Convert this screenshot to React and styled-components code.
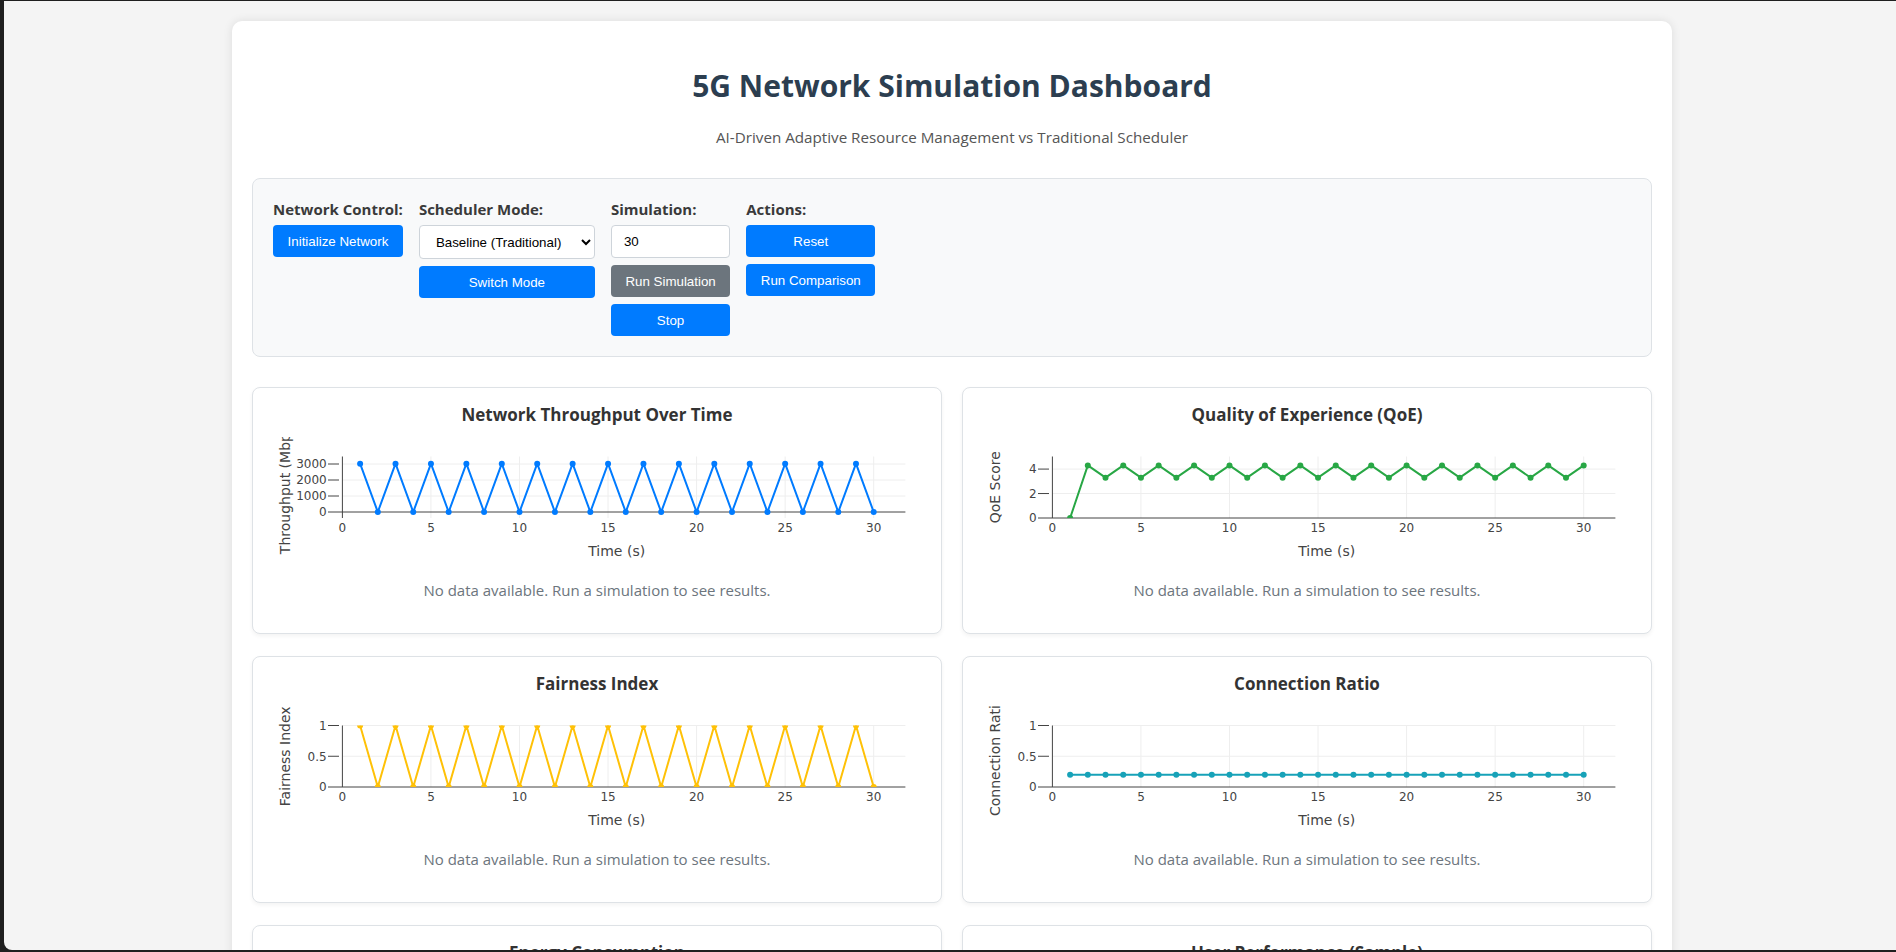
import React from "react";
import styled, { createGlobalStyle } from "styled-components";

const GlobalStyle = createGlobalStyle`
  html, body {
    margin: 0;
    padding: 0;
    background: #1f1f1f;
  }
  body {
    font-family: "Open Sans", "Noto Sans", sans-serif;
    color: #333;
  }
  * {
    box-sizing: border-box;
  }
`;

// browser window area (dark frame around it in the screenshot)
const Viewport = styled.div`
  margin: 1px 0 0 4px;
  padding-left: 4px;
  height: 949px;
  background: #f4f4f4;
  overflow: hidden;
  border-bottom-left-radius: 8px;
`;

const Container = styled.div`
  max-width: 1440px;
  margin: 20px auto;
  padding: 20px;
  background: #fff;
  border-radius: 10px;
  box-shadow: 0 0 10px rgba(0, 0, 0, 0.1);
`;

const Header = styled.div`
  text-align: center;
  margin-bottom: 30px;
`;

const Title = styled.h1`
  margin: 23px 0 20px;
  font-size: 30px;
  line-height: 43px;
  font-weight: 700;
  color: #2c3e50;
`;

const Subtitle = styled.p`
  margin: 0;
  font-size: 15.2px;
  line-height: 21px;
  color: #555;
`;

const ControlPanel = styled.div`
  display: flex;
  flex-wrap: wrap;
  align-items: flex-start;
  gap: 16px;
  padding: 20px;
  margin-bottom: 30px;
  background: #f8f9fa;
  border: 1px solid #dee2e6;
  border-radius: 8px;
`;

const ControlGroup = styled.div`
  display: flex;
  flex-direction: column;
  gap: 7px;
`;

const Label = styled.label`
  font-size: 15px;
  line-height: 21px;
  font-weight: 700;
  color: #3a3a3a;
  margin-bottom: -2px;
  white-space: nowrap;
`;

const Button = styled.button`
  height: 32px;
  padding: 0 14.5px;
  border: none;
  border-radius: 4px;
  background: ${(p) => (p.$secondary ? "#6c757d" : "#007bff")};
  color: #fff;
  font-family: "Liberation Sans", Arial, sans-serif;
  font-size: 13.333px;
  white-space: nowrap;
  cursor: pointer;
`;

const Select = styled.select`
  height: 34px;
  padding: 0 16px 0 12px;
  border: 1px solid #ced4da;
  border-radius: 4px;
  background: #fff;
  color: #000;
  font-family: "Liberation Sans", Arial, sans-serif;
  font-size: 13.333px;
`;

const NumberInput = styled.input`
  width: 0;
  min-width: 100%;
  height: 33px;
  padding: 0 12px;
  border: 1px solid #ced4da;
  border-radius: 4px;
  background: #fff;
  color: #000;
  font-family: "Liberation Sans", Arial, sans-serif;
  font-size: 13.333px;
`;

const ChartGrid = styled.div`
  display: grid;
  grid-template-columns: 1fr 1fr;
  column-gap: 20px;
  row-gap: 22px;
`;

const ChartCard = styled.div`
  background: #fff;
  border: 1px solid #dee2e6;
  border-radius: 8px;
  padding: 15px;
  box-shadow: 0 2px 4px rgba(0, 0, 0, 0.05);
`;

const ChartTitle = styled.h3`
  margin: 0 0 10px;
  font-size: 17px;
  line-height: 24px;
  font-weight: 700;
  text-align: center;
  color: #333;
`;

const ChartSvg = styled.svg`
  display: block;
  overflow: hidden;
  font-family: "DejaVu Sans", Verdana, sans-serif;
`;

const NoData = styled.div`
  padding: 17px 0;
  text-align: center;
  font-size: 15px;
  line-height: 21px;
  color: #6c757d;
`;

// plot geometry (px inside the chart svg)
const W = 658;
const H = 126;
const PL = 60;
const PR = 637.4;
const PT = 19.5;
const PB = 81;
const X_MIN = -0.813;
const X_MAX = 31.79;
const sx = (x) => PL + ((x - X_MIN) / (X_MAX - X_MIN)) * (PR - PL);
const X_TICKS = [0, 5, 10, 15, 20, 25, 30];

function LineChart({ id, data, color, yMin, yMax, yTicks, yTitle }) {
  const sy = (v) => PB - ((v - yMin) / (yMax - yMin)) * (PB - PT);
  const zeroY = sy(0);
  const zeroX = sx(0);
  const pts = data.map((v, i) => [sx(i + 1), sy(v)]);

  return (
    <ChartSvg width={W} height={H} viewBox={`0 0 ${W} ${H}`}>
      <defs>
        <clipPath id={id}>
          <rect x={PL} y={PT} width={PR - PL} height={PB - PT} />
        </clipPath>
      </defs>

      {X_TICKS.filter((t) => t !== 0).map((t) => (
        <line key={t} x1={sx(t)} x2={sx(t)} y1={PT} y2={PB} stroke="#eee" />
      ))}
      {yTicks.filter((t) => t !== 0).map((t) => (
        <g key={t}>
          <line x1={zeroX} x2={PR} y1={sy(t)} y2={sy(t)} stroke="#eee" />
          <line x1={PL} x2={PL + 11} y1={sy(t)} y2={sy(t)} stroke="#444" />
        </g>
      ))}

      <line x1={PL} x2={PR} y1={zeroY} y2={zeroY} stroke="#444" />
      <line x1={zeroX} x2={zeroX} y1={PT} y2={PB} stroke="#444" />

      <g clipPath={`url(#${id})`}>
        <polyline
          points={pts.map((p) => p.join(",")).join(" ")}
          fill="none"
          stroke={color}
          strokeWidth="2"
          strokeLinejoin="round"
        />
        {pts.map(([x, y], i) => (
          <circle key={i} cx={x} cy={y} r="3" fill={color} />
        ))}
      </g>

      <g fontSize="12" fill="#444">
        {X_TICKS.map((t) => (
          <text key={t} x={sx(t)} y={PB + 14.1} textAnchor="middle">
            {t}
          </text>
        ))}
        {yTicks.map((t) => (
          <text key={t} x={PL - 1.3} y={sy(t) + 4.4} textAnchor="end">
            {t}
          </text>
        ))}
      </g>

      <text x={(PL + PR) / 2} y={118.5} fontSize="14" fill="#444" textAnchor="middle">
        Time (s)
      </text>
      <text
        transform={`translate(21.5, ${(PT + PB) / 2}) rotate(-90)`}
        fontSize="14"
        fill="#444"
        textAnchor="middle"
      >
        {yTitle}
      </text>
    </ChartSvg>
  );
}

const range30 = (fn) => Array.from({ length: 30 }, (_, i) => fn(i + 1));

const charts = [
  {
    id: "throughput",
    title: "Network Throughput Over Time",
    yTitle: "Throughput (Mbps)",
    color: "#007bff",
    data: range30((x) => (x % 2 ? 3020 : 0)),
    yMin: -375,
    yMax: 3469,
    yTicks: [0, 1000, 2000, 3000],
  },
  {
    id: "qoe",
    title: "Quality of Experience (QoE)",
    yTitle: "QoE Score",
    color: "#28a745",
    data: range30((x) => (x === 1 ? 0 : x % 2 ? 3.3 : 4.3)),
    yMin: 0,
    yMax: 5.03,
    yTicks: [0, 2, 4],
  },
  {
    id: "fairness",
    title: "Fairness Index",
    yTitle: "Fairness Index",
    color: "#ffc107",
    data: range30((x) => (x % 2 ? 1 : 0)),
    yMin: 0,
    yMax: 1,
    yTicks: [0, 0.5, 1],
  },
  {
    id: "connection",
    title: "Connection Ratio",
    yTitle: "Connection Ratio",
    color: "#17a2b8",
    data: range30(() => 0.2),
    yMin: 0,
    yMax: 1,
    yTicks: [0, 0.5, 1],
  },
];

export default function App() {
  return (
    <>
      <GlobalStyle />
      <Viewport>
        <Container>
          <Header>
            <Title>5G Network Simulation Dashboard</Title>
            <Subtitle>AI-Driven Adaptive Resource Management vs Traditional Scheduler</Subtitle>
          </Header>

          <ControlPanel>
            <ControlGroup>
              <Label>Network Control:</Label>
              <Button>Initialize Network</Button>
            </ControlGroup>
            <ControlGroup>
              <Label>Scheduler Mode:</Label>
              <Select defaultValue="baseline">
                <option value="baseline">Baseline (Traditional)</option>
                <option value="ai">AI-Driven (Adaptive)</option>
              </Select>
              <Button>Switch Mode</Button>
            </ControlGroup>
            <ControlGroup>
              <Label>Simulation:</Label>
              <NumberInput type="number" defaultValue={30} />
              <Button $secondary>Run Simulation</Button>
              <Button>Stop</Button>
            </ControlGroup>
            <ControlGroup>
              <Label>Actions:</Label>
              <Button>Reset</Button>
              <Button>Run Comparison</Button>
            </ControlGroup>
          </ControlPanel>

          <ChartGrid>
            {charts.map((c) => (
              <ChartCard key={c.id}>
                <ChartTitle>{c.title}</ChartTitle>
                <LineChart {...c} />
                <NoData>No data available. Run a simulation to see results.</NoData>
              </ChartCard>
            ))}
            <ChartCard>
              <ChartTitle>Energy Consumption</ChartTitle>
            </ChartCard>
            <ChartCard>
              <ChartTitle>User Performance (Sample)</ChartTitle>
            </ChartCard>
          </ChartGrid>
        </Container>
      </Viewport>
    </>
  );
}
